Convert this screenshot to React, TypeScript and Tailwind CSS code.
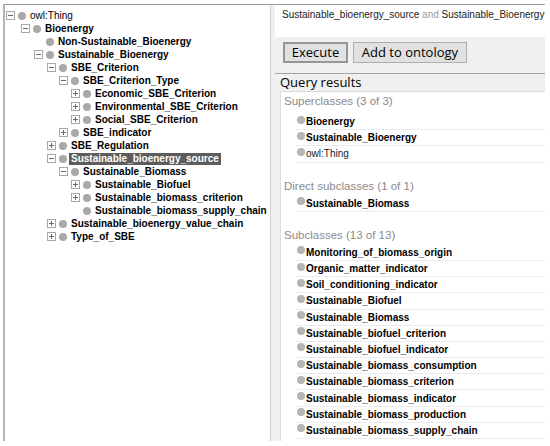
type TreeNode = {
  label: string;
  level: number;
  toggle?: 'plus' | 'minus';
  plain?: boolean;
  selected?: boolean;
};

// class hierarchy shown in the left pane
const tree: TreeNode[] = [
  { label: 'owl:Thing', level: 0, toggle: 'minus', plain: true },
  { label: 'Bioenergy', level: 1, toggle: 'minus' },
  { label: 'Non-Sustainable_Bioenergy', level: 2 },
  { label: 'Sustainable_Bioenergy', level: 2, toggle: 'minus' },
  { label: 'SBE_Criterion', level: 3, toggle: 'minus' },
  { label: 'SBE_Criterion_Type', level: 4, toggle: 'minus' },
  { label: 'Economic_SBE_Criterion', level: 5, toggle: 'plus' },
  { label: 'Environmental_SBE_Criterion', level: 5, toggle: 'plus' },
  { label: 'Social_SBE_Criterion', level: 5, toggle: 'plus' },
  { label: 'SBE_indicator', level: 4, toggle: 'plus' },
  { label: 'SBE_Regulation', level: 3, toggle: 'plus' },
  { label: 'Sustainable_bioenergy_source', level: 3, toggle: 'minus', selected: true },
  { label: 'Sustainable_Biomass', level: 4, toggle: 'minus' },
  { label: 'Sustainable_Biofuel', level: 5, toggle: 'plus' },
  { label: 'Sustainable_biomass_criterion', level: 5, toggle: 'plus' },
  { label: 'Sustainable_biomass_supply_chain', level: 5 },
  { label: 'Sustainable_bioenergy_value_chain', level: 3, toggle: 'plus' },
  { label: 'Type_of_SBE', level: 3, toggle: 'plus' },
];

const indent = ['pl-[1px]', 'pl-[16px]', 'pl-[29px]', 'pl-[42px]', 'pl-[54px]', 'pl-[66px]'];

const superclasses = [
  { label: 'Bioenergy' },
  { label: 'Sustainable_Bioenergy' },
  { label: 'owl:Thing', plain: true },
];

const directSubclasses = [{ label: 'Sustainable_Biomass' }];

const subclasses = [
  { label: 'Monitoring_of_biomass_origin' },
  { label: 'Organic_matter_indicator' },
  { label: 'Soil_conditioning_indicator' },
  { label: 'Sustainable_Biofuel' },
  { label: 'Sustainable_Biomass' },
  { label: 'Sustainable_biofuel_criterion' },
  { label: 'Sustainable_biofuel_indicator' },
  { label: 'Sustainable_biomass_consumption' },
  { label: 'Sustainable_biomass_criterion' },
  { label: 'Sustainable_biomass_indicator' },
  { label: 'Sustainable_biomass_production' },
  { label: 'Sustainable_biomass_supply_chain' },
];

const Toggle = ({ kind }: { kind?: 'plus' | 'minus' }) => {
  if (!kind) return <span className="block w-[9px] h-[9px] shrink-0" />;
  return (
    <svg width="9" height="9" viewBox="0 0 9 9" className="shrink-0">
      <rect x="0.5" y="0.5" width="8" height="8" fill="#fff" stroke="#a8a8a8" />
      <line x1="2" y1="4.5" x2="7" y2="4.5" stroke="#6a6a6a" />
      {kind === 'plus' && <line x1="4.5" y1="2" x2="4.5" y2="7" stroke="#6a6a6a" />}
    </svg>
  );
};

const TreeRow = ({ node }: { node: TreeNode }) => (
  <div className={`h-[13px] flex items-center ${indent[node.level]}`}>
    <Toggle kind={node.toggle} />
    <span className="block ml-[3px] w-[8px] h-[8px] rounded-full bg-[#a9a9a9] shrink-0" />
    <span
      className={`ml-[2px] px-[2px] text-[10px] leading-[12px] whitespace-nowrap ${
        node.plain ? 'font-normal text-[#222]' : 'font-bold'
      } ${node.selected ? 'bg-[#5c5c5c] text-white' : 'text-black'}`}
    >
      {node.label}
    </span>
  </div>
);

const ResultRow = ({ label, plain }: { label: string; plain?: boolean }) => (
  <div className="ml-[15px] h-[16.2px] border-b border-[#ececec] flex items-center">
    <span className="block ml-[1px] -mt-[4px] w-[8px] h-[8px] rounded-full bg-[#b4b4b4] shrink-0" />
    <span className={`ml-[1px] text-[10px] whitespace-nowrap ${plain ? 'font-normal text-[#222]' : 'font-bold text-black'}`}>
      {label}
    </span>
  </div>
);

const SectionTitle = ({ text, first }: { text: string; first?: boolean }) => (
  <div
    className={`h-[16px] pl-[3px] flex items-center text-[11.5px] text-[#8a8a8a] whitespace-nowrap ${
      first ? 'mt-[2px] mb-[4px]' : 'mt-[16px] mb-[1px]'
    }`}
  >
    {text}
  </div>
);

export default function App() {
  return (
    <div className="w-[550px] h-[446px] bg-white overflow-hidden font-['Liberation_Sans',Arial,sans-serif]">
      <div className="ml-[3px] mt-[4px] w-[542px] h-[437px] border-t border-[#9d9d9d] flex">
        {/* class tree */}
        <div className="w-[268px] h-full border-l-2 border-l-[#b5b5b5] border-r border-r-[#d2d2d2] bg-white pt-[4px] overflow-hidden">
          {tree.map((node) => (
            <TreeRow key={node.label} node={node} />
          ))}
        </div>
        <div className="w-[4px] h-full bg-[#f0f0f0]" />

        {/* DL query pane */}
        <div className="flex-1 h-full bg-[#f0f0f0] flex flex-col min-w-0">
          <div className="h-[32px] bg-white pl-[7px] pt-[4px] text-[10px] leading-[12px] text-[#222] whitespace-nowrap overflow-hidden">
            Sustainable_bioenergy_source <span className="text-[#9a9a9a]">and</span> Sustainable_Bioenergy
          </div>
          <div className="h-[36px] pl-[8px] pt-[5px] flex items-start gap-[5px] font-['Open_Sans',sans-serif] text-[13px] text-black">
            <button className="w-[65px] h-[21px] bg-[#e1e1e1] border-2 border-[#969696] flex items-center justify-center leading-none">
              Execute
            </button>
            <button className="w-[114px] h-[21px] bg-[#e1e1e1] border border-[#adadad] flex items-center justify-center leading-none">
              Add to ontology
            </button>
          </div>
          <div className="border-t border-[#a3a3a3]" />
          <div className="h-[17px] pl-[5px] flex items-center font-['Open_Sans',sans-serif] text-[13px] text-black">
            Query results
          </div>
          <div className="flex-1 ml-[5px] bg-white border-l border-t border-[#dcdcdc] overflow-hidden">
            <SectionTitle text="Superclasses (3 of 3)" first />
            {superclasses.map((r) => (
              <ResultRow key={r.label} label={r.label} plain={r.plain} />
            ))}
            <SectionTitle text="Direct subclasses (1 of 1)" />
            {directSubclasses.map((r) => (
              <ResultRow key={r.label} label={r.label} />
            ))}
            <SectionTitle text="Subclasses (13 of 13)" />
            {subclasses.map((r) => (
              <ResultRow key={r.label} label={r.label} />
            ))}
          </div>
        </div>
      </div>
    </div>
  );
}
